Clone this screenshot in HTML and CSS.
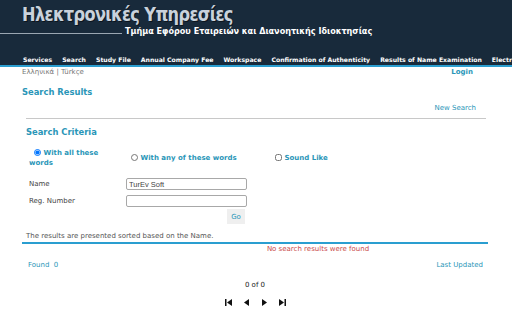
FILE: index.html
```html
<!DOCTYPE html>
<html lang="el">
<head>
  <meta charset="UTF-8">
  <title>Search Results</title>
  <link rel="stylesheet" href="styles.css">
</head>
<body>

  <div class="header">
    <div class="brand">
      <div class="brand-title">Ηλεκτρονικές Υπηρεσίες</div>
      <div class="brand-sub">
        <span class="brand-rule"></span>
        <span class="brand-text">Τμήμα Εφόρου Εταιρειών και Διανοητικής Ιδιοκτησίας</span>
      </div>
    </div>
    <div class="navbar">
      <a href="#">Services</a>
      <a href="#">Search</a>
      <a href="#">Study File</a>
      <a href="#">Annual Company Fee</a>
      <a href="#">Workspace</a>
      <a href="#">Confirmation of Authenticity</a>
      <a href="#">Results of Name Examination</a>
      <a href="#">Electronic Submission</a>
    </div>
  </div>

  <div class="langbar">
    <div class="langs"><a href="#">Ελληνικά</a> | <a href="#">Türkçe</a></div>
    <a href="#" class="login">Login</a>
  </div>

  <div class="container">
    <h1>Search Results</h1>
    <div class="new-search"><a href="#">New Search</a></div>

    <div class="criteria">
      <h2>Search Criteria</h2>

      <div class="options">
        <label class="opt opt-all"><input type="radio" name="mode" checked> With all these words</label>
        <label class="opt opt-any"><input type="radio" name="mode"> With any of these words</label>
        <label class="opt opt-sound"><input type="checkbox"> Sound Like</label>
      </div>

      <div class="field">
        <label for="name">Name</label>
        <input type="text" id="name" value="TurEv Soft">
      </div>
      <div class="field">
        <label for="regnum">Reg. Number</label>
        <input type="text" id="regnum">
      </div>
      <div class="go-row">
        <button class="go">Go</button>
      </div>
    </div>

    <div class="sorted">The results are presented sorted based on the Name.</div>
    <div class="empty">No search results were found</div>

    <div class="summary">
      <span class="found">Found&nbsp; 0</span>
      <span class="updated">Last Updated</span>
    </div>

    <div class="pager">
      <div class="pages">0 of 0</div>
      <div class="pager-icons">
        <svg width="7" height="7" viewBox="0 0 7 7"><rect x="0" y="0" width="1.5" height="7"/><polygon points="7,0 7,7 2,3.5"/></svg>
        <svg width="7" height="7" viewBox="0 0 7 7"><polygon points="6,0 6,7 1,3.5"/></svg>
        <svg width="7" height="7" viewBox="0 0 7 7"><polygon points="1,0 1,7 6,3.5"/></svg>
        <svg width="7" height="7" viewBox="0 0 7 7"><polygon points="0,0 0,7 5,3.5"/><rect x="5.5" y="0" width="1.5" height="7"/></svg>
      </div>
    </div>
  </div>

</body>
</html>
```

FILE: styles.css
```css
body, html {
  margin: 0;
  padding: 0;
  background: #ffffff;
  font-family: "DejaVu Sans", Verdana, sans-serif;
  font-size: 7px;
  color: #444;
}

a {
  text-decoration: none;
}

/* Cabecera oscura */
.header {
  background: #182a3b;
  height: 65px;
  border-bottom: 2px solid #2a9ed0;
  overflow: hidden;
}

.brand {
  height: 54px;
}

.brand-title {
  padding: 2px 0 0 22px;
  font-family: "DejaVu Sans Condensed", "DejaVu Sans", sans-serif;
  font-stretch: condensed;
  font-weight: bold;
  font-size: 20px;
  line-height: 24px;
  letter-spacing: -0.7px;
  color: #c9d2dc;
  text-shadow: 1px 1px 0 #0c151e;
  transform: scaleX(0.9);
  transform-origin: 22px 0;
}

.brand-sub {
  display: flex;
  align-items: flex-end;
  height: 10px;
}

.brand-rule {
  width: 122px;
  border-bottom: 1px solid #9aa6b2;
  margin-right: 3px;
  margin-bottom: 2px;
}

.brand-text {
  color: #ffffff;
  font-weight: bold;
  font-size: 8.1px;
  line-height: 10px;
  white-space: nowrap;
}

.navbar {
  display: flex;
  gap: 10px;
  padding-left: 23px;
  white-space: nowrap;
  height: 11px;
  line-height: 11px;
}

.navbar a {
  color: #ffffff;
  font-weight: bold;
  font-size: 6.15px;
}

.langbar {
  display: flex;
  justify-content: space-between;
  padding: 0 39px 0 22px;
  height: 10px;
  line-height: 10px;
}

.langs, .langs a {
  color: #777;
  font-size: 7px;
}

.login {
  color: #2a96b8;
  font-weight: bold;
  font-size: 7px;
}

/* Contenido */
.container {
  padding: 0 24px 0 22px;
}

h1 {
  margin: 9px 0 0 0;
  color: #2a96b8;
  font-size: 8.4px;
  line-height: 12px;
}

.new-search {
  text-align: right;
  padding-right: 12px;
  margin-top: 4px;
  line-height: 12px;
}

.new-search a {
  color: #2a96b8;
  font-size: 7px;
}

.criteria {
  margin-left: 4px;
  margin-right: 2px;
  border-top: 1px solid #c8c8c8;
  margin-top: 4px;
}

h2 {
  margin: 7px 0 0 0;
  color: #2a96b8;
  font-size: 8.4px;
  line-height: 12px;
}

.options {
  display: flex;
  align-items: center;
  margin-top: 9px;
  height: 22px;
}

.opt {
  color: #2a96b8;
  font-weight: bold;
  font-size: 7px;
  line-height: 10px;
}

.opt input {
  width: 7px;
  height: 7px;
  margin: 0;
  vertical-align: -1px;
}

.opt-all {
  width: 72px;
  padding-left: 3px;
  margin-right: 30px;
  text-indent: 5px;
}

.opt-any {
  width: 144px;
}

.field {
  display: flex;
  align-items: center;
  margin-top: 9px;
  padding-left: 3px;
}

.field + .field {
  margin-top: 5px;
}

.field label {
  width: 97px;
  font-size: 7px;
  color: #444;
}

.field input {
  width: 115px;
  height: 8px;
  padding: 1px 2px;
  border: 1px solid #a8a8a8;
  border-radius: 2px;
  font-family: "Liberation Sans", Arial, sans-serif;
  font-size: 7.5px;
  color: #444;
  margin: 0;
}

.go-row {
  display: flex;
  justify-content: flex-start;
  padding-left: 201px;
  margin-top: 2px;
}

.go {
  width: 18px;
  height: 15px;
  padding: 0;
  border: none;
  background: #efefef;
  color: #2a96b8;
  font-family: "DejaVu Sans", sans-serif;
  font-size: 7px;
}

.sorted {
  margin-top: 8px;
  padding-left: 4px;
  padding-bottom: 1px;
  border-bottom: 2px solid #2a9ed0;
  line-height: 9px;
  color: #555;
}

.empty {
  color: #c84848;
  text-align: center;
  line-height: 11px;
  padding-left: 126px;
}

.summary {
  display: flex;
  justify-content: space-between;
  padding: 0 5px 0 6px;
  margin-top: 4px;
  line-height: 12px;
}

.found, .updated {
  color: #2a96b8;
}

.pager {
  margin-top: 9px;
  text-align: center;
}

.pages {
  color: #222;
  line-height: 10px;
}

.pager-icons {
  display: flex;
  justify-content: center;
  gap: 11px;
  margin-top: 9px;
}

.pager-icons svg {
  fill: #111;
}
```
